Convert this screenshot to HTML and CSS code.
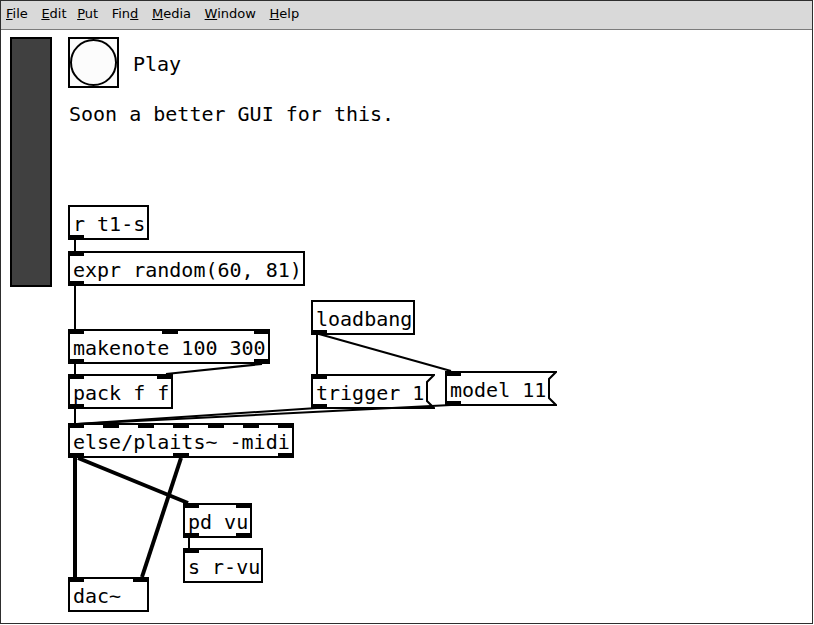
FILE: index.html
```html
<!DOCTYPE html>
<html>
<head>
<meta charset="utf-8">
<link rel="stylesheet" href="styles.css">
</head>
<body>
<div class="window">
  <div class="menubar">
    <span class="menu"><u>F</u>ile</span>
    <span class="menu menu-edit"><u>E</u>dit</span>
    <span class="menu"><u>P</u>ut</span>
    <span class="menu">Fin<u>d</u></span>
    <span class="menu"><u>M</u>edia</span>
    <span class="menu"><u>W</u>indow</span>
    <span class="menu"><u>H</u>elp</span>
  </div>
  <div class="canvas">
    <svg class="wires" width="811" height="593">
      <g stroke="#000" stroke-width="2" fill="none">
        <line x1="74" y1="210" x2="74" y2="221"/>
        <line x1="74" y1="256" x2="74" y2="299"/>
        <line x1="74" y1="334" x2="74" y2="344"/>
        <line x1="261" y1="334" x2="165" y2="344"/>
        <line x1="316" y1="304" x2="316" y2="344"/>
        <line x1="318" y1="304" x2="450" y2="341"/>
        <line x1="74" y1="378" x2="74" y2="393"/>
        <line x1="316" y1="378" x2="76" y2="394"/>
        <line x1="450" y1="375" x2="76" y2="394"/>
        <line x1="188" y1="507" x2="188" y2="518"/>
      </g>
      <g stroke="#000" stroke-width="4" fill="none">
        <line x1="74" y1="428" x2="74" y2="547"/>
        <line x1="77" y1="428" x2="187" y2="473"/>
        <line x1="180" y1="428" x2="141" y2="547"/>
      </g>
    </svg>

    <div class="vu"></div>

    <div class="bang">
      <svg width="47" height="47" class="bang-svg">
        <circle cx="23.5" cy="23.5" r="22.5" fill="#fcfcfc" stroke="#000" stroke-width="2"/>
      </svg>
    </div>
    <div class="label play-label">Play</div>
    <div class="label comment">Soon a better GUI for this.</div>

    <div class="box b-rt1s">r t1-s<i class="io out l"></i></div>
    <div class="box b-expr">expr random(60, 81)<i class="io in l"></i><i class="io out l"></i></div>
    <div class="box b-makenote">makenote 100 300<i class="io in l"></i><i class="io in m1"></i><i class="io in r"></i><i class="io out l"></i><i class="io out r"></i></div>
    <div class="box b-pack">pack f f<i class="io in l"></i><i class="io in r"></i><i class="io out l"></i></div>
    <div class="box b-loadbang">loadbang<i class="io out l"></i></div>

    <div class="box msg b-trigger"><svg class="msg-shape" width="124" height="35"><polygon points="1,1 123,1 116,8 116,27 123,34 1,34" fill="none" stroke="#000" stroke-width="2"/></svg><span class="txt">trigger 1</span><i class="io in l"></i><i class="io out l"></i></div>
    <div class="box msg b-model"><svg class="msg-shape" width="112" height="35"><polygon points="1,1 111,1 104,8 104,27 111,34 1,34" fill="none" stroke="#000" stroke-width="2"/></svg><span class="txt">model 11</span><i class="io in l"></i><i class="io out l"></i></div>

    <div class="box b-plaits">else/plaits~ -midi<i class="io in l"></i><i class="io in p1"></i><i class="io in p2"></i><i class="io in p3"></i><i class="io in p4"></i><i class="io in p5"></i><i class="io in r"></i><i class="io out l"></i><i class="io out p3"></i><i class="io out r"></i></div>
    <div class="box b-pdvu">pd vu<i class="io in l"></i><i class="io in r"></i><i class="io out l"></i><i class="io out r"></i></div>
    <div class="box b-srvu">s r-vu<i class="io in l"></i></div>
    <div class="box b-dac">dac~<i class="io in l"></i><i class="io in r"></i></div>
  </div>
</div>
</body>
</html>
```

FILE: styles.css
```css
html, body {
  margin: 0;
  padding: 0;
  background: #ffffff;
}

.window {
  width: 813px;
  height: 624px;
  box-sizing: border-box;
  border: 1px solid #2e2e2e;
  background: #ffffff;
  display: flex;
  flex-direction: column;
  overflow: hidden;
}

.menubar {
  height: 29px;
  box-sizing: border-box;
  background: #d9d9d9;
  border-bottom: 1px solid #7c7c7c;
  display: flex;
  gap: 13.6px;
  padding-left: 5px;
  font-family: "DejaVu Sans", sans-serif;
  font-size: 13px;
  line-height: 26px;
  color: #000;
  white-space: nowrap;
}

.menu u {
  text-decoration-thickness: 1px;
}

.menu-edit {
  margin-right: -3px;
}

.canvas {
  position: relative;
  flex: 1;
  font-family: "DejaVu Sans Mono", monospace;
  font-size: 20px;
  line-height: 24px;
  color: #000;
}

.wires {
  position: absolute;
  left: 0;
  top: 0;
}

.vu {
  position: absolute;
  left: 9px;
  top: 7px;
  width: 42px;
  height: 250px;
  box-sizing: border-box;
  border: 2px solid #000;
  background: #404040;
}

.bang {
  position: absolute;
  left: 67px;
  top: 7px;
  width: 51px;
  height: 51px;
  box-sizing: border-box;
  border: 2px solid #000;
  background: #fcfcfc;
}

.bang-svg {
  display: block;
}

.label {
  position: absolute;
  white-space: pre;
}

.play-label {
  left: 132px;
  top: 22px;
}

.comment {
  left: 68px;
  top: 72px;
}

.box {
  position: absolute;
  height: 35px;
  box-sizing: border-box;
  border: 2px solid #000;
  padding: 5px 0 0 3px;
  white-space: nowrap;
}

.msg {
  border-color: transparent;
}

.msg-shape {
  position: absolute;
  left: -2px;
  top: -2px;
}

.txt {
  position: relative;
}

.io {
  position: absolute;
  width: 16px;
  height: 5px;
  background: #000;
}

.io.in { top: -2px; }
.io.out { bottom: -2px; }
.io.l { left: -2px; }
.io.r { right: -2px; }
.io.m1 { left: 92px; }
.io.p1 { left: 33px; }
.io.p2 { left: 68px; }
.io.p3 { left: 103px; }
.io.p4 { left: 138px; }
.io.p5 { left: 173px; }

.b-rt1s { left: 67px; top: 175px; width: 81px; }
.b-expr { left: 67px; top: 221px; width: 237px; }
.b-makenote { left: 67px; top: 299px; width: 202px; }
.b-pack { left: 67px; top: 344px; width: 105px; }
.b-loadbang { left: 310px; top: 270px; width: 104px; }
.b-trigger { left: 310px; top: 344px; width: 124px; }
.b-model { left: 444px; top: 341px; width: 112px; }
.b-plaits { left: 67px; top: 393px; width: 226px; }
.b-pdvu { left: 182px; top: 473px; width: 69px; }
.b-srvu { left: 182px; top: 518px; width: 80px; }
.b-dac { left: 67px; top: 547px; width: 81px; }
```
